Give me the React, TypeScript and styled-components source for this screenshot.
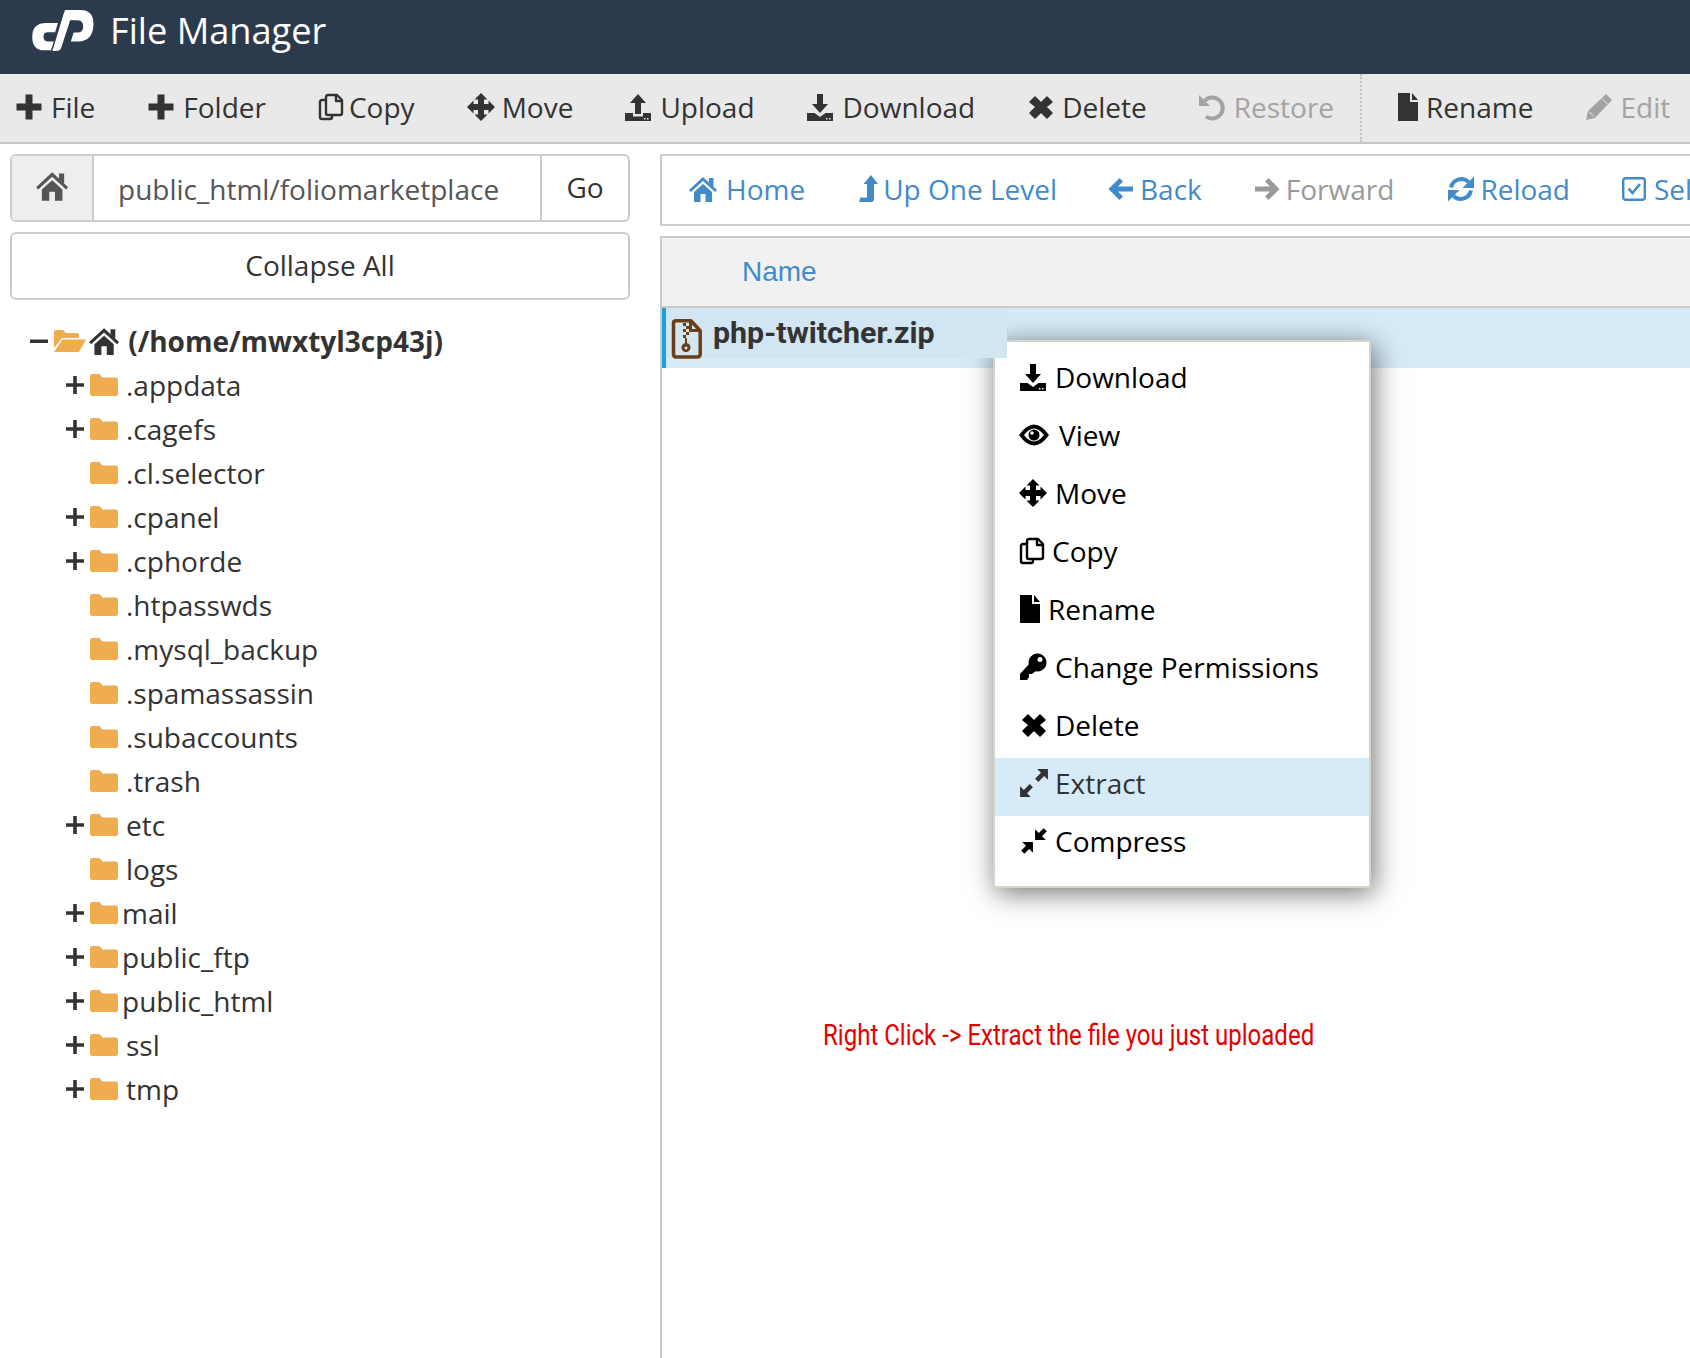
import React from "react";
import styled, { createGlobalStyle } from "styled-components";

const Global = createGlobalStyle`
  html, body { margin: 0; padding: 0; background: #fff; }
  body { font-family: "Open Sans", "Liberation Sans", sans-serif; color: #333; overflow: hidden; }
  * { box-sizing: border-box; }
`;

type IconName =
  | "plus" | "files" | "move" | "upload" | "download" | "times" | "undo" | "file" | "pencil"
  | "home" | "levelUp" | "left" | "right" | "refresh" | "check" | "folder" | "folderOpen"
  | "eye" | "key" | "expand" | "compress" | "zip";

const shapes: Record<IconName, { w: number; h?: number; body: React.ReactNode }> = {
  plus: { w: 28, body: <path d="M10.500 1.500h7v9h9v7h-9v9h-7v-9h-9v-7h9z" /> },
  files: {
    w: 23,
    body: (
      <g fill="none" stroke="currentColor" strokeWidth="2.400" strokeLinejoin="round">
        <path d="M8 7H4Q2 7 2 9v15q0 2 2 2h8q2 0 2-2v-2" />
        <path d="M10 2h9l5 5v13q0 2-2 2H10q-2 0-2-2V4q0-2 2-2z" />
        <path d="M18 2v6h6" />
      </g>
    ),
  },
  move: {
    w: 27,
    body: <path d="M14 0L20.500 6.500H17V11H21.500V7.500L28 14 21.500 20.500V17H17V21.500H20.500L14 28 7.500 21.500H11V17H6.500V20.500L0 14 6.500 7.500V11H11V6.500H7.500z" />,
  },
  upload: {
    w: 28,
    body: <path fillRule="evenodd" d="M14 1l8 9h-5V21h-6V10H6zM1 20h8v3.500h10V20h8v8H1zM20 25h1.500v1.500H20zM23 25h1.500v1.500H23z" />,
  },
  download: {
    w: 29,
    body: <path fillRule="evenodd" d="M11 1h6v10h5l-8 9-8-9h5zM1 20h7.500l5.500 4 5.500-4H27v8H1zM20 25h1.500v1.500H20zM23 25h1.500v1.500H23z" />,
  },
  times: {
    w: 25,
    body: <path strokeLinejoin="round" stroke="currentColor" strokeWidth="1.500" d="M6 4l6 6 6-6 5 5-6 5 6 6-5 5-6-6-6 6-5-5 6-6-6-5z" />,
  },
  undo: {
    w: 29,
    body: (
      <g>
        <path fill="none" stroke="currentColor" strokeWidth="4" d="M9 23.500A10.500 10.500 0 1 0 7.500 8" />
        <path d="M2 2v11h11z" />
      </g>
    ),
  },
  file: { w: 21, body: <path fillRule="evenodd" d="M1 0h12v9h8v19H1zM15 0l6 7h-6z" /> },
  pencil: {
    w: 28,
    body: (
      <g>
        <path d="M22 1l6 6-17 18-9 2 2-9z" />
        <path fill="none" stroke="#e9e9e9" strokeWidth="1" d="M18 5.500l5.500 5.500M5 18.500l5 5" />
      </g>
    ),
  },
  home: {
    w: 30,
    body: (
      <g>
        <path d="M15 2L29 15l-1.800 2L15 6 2.800 17 1 15z" />
        <path d="M6 17L15 9l9 8v10h-6.500v-8h-5v8H6z" />
        <path d="M21 3h4.500v9L21 8z" />
      </g>
    ),
  },
  levelUp: { w: 18, body: <path d="M14 0l7 9h-4v15q0 3-3 3H2l1.500-4.500H10V9H6.500z" /> },
  left: { w: 24, body: <path d="M11.500 3l3.500 3.500-5 5h15v5H10l5 5-3.500 3.500L0.500 14z" /> },
  right: { w: 24, body: <path d="M14.500 3L11 6.500l5 5H1v5h15l-5 5 3.500 3.500 11-11z" /> },
  refresh: {
    w: 26,
    body: (
      <g>
        <path fill="none" stroke="currentColor" strokeWidth="4" d="M5 12.500A10.500 10.500 0 0 1 22.500 7" />
        <path d="M28 1.500v11.500H16.500z" />
        <path fill="none" stroke="currentColor" strokeWidth="4" d="M25 15.500A10.500 10.500 0 0 1 7.500 21" />
        <path d="M2 26.500V15h11.500z" />
      </g>
    ),
  },
  check: {
    w: 25,
    body: (
      <g fill="none" stroke="currentColor">
        <rect x="2.200" y="3.200" width="21.600" height="21.600" rx="2.500" strokeWidth="2.400" />
        <path strokeWidth="2.600" d="M7.500 13.500l4 4.500 7.500-9" />
      </g>
    ),
  },
  folder: { w: 28, body: <path d="M0 5.500Q0 3 2.500 3h7l3 3.500h13Q28 6.500 28 9v14q0 2-2 2H2q-2 0-2-2z" /> },
  folderOpen: {
    w: 32,
    body: (
      <g>
        <path d="M0 5q0-2 2-2h7l3 3h11q2 0 2 2v3H8L1 20H0z" />
        <path d="M8.500 12.500H32l-7 12.500H0z" />
      </g>
    ),
  },
  eye: {
    w: 32,
    body: (
      <g>
        <path d="M0 14Q15-7 30 14 15 35 0 14z" />
        <path fill="#fff" d="M5 14Q15 1 25 14 15 27 5 14z" />
        <circle cx="15" cy="14" r="5.500" />
        <circle cx="13" cy="12" r="1.800" fill="#fff" />
      </g>
    ),
  },
  key: {
    w: 28,
    body: (
      <g>
        <path fillRule="evenodd" d="M18.500 0.500a9 9 0 1 1-.01 0zM21 4a2.500 2.500 0 1 0 .01 0z" />
        <path d="M11 10L1 21v6h7l2-3v-3h3l5-4z" />
      </g>
    ),
  },
  expand: {
    w: 28,
    body: <path d="M17 1h10v10l-3.500-3.500-5.500 5.500-3-3 5.500-5.500zM11 27H1V17l3.500 3.500L10 15l3 3-5.500 5.500z" />,
  },
  compress: {
    w: 28,
    body: <path d="M15 13V3l3.500 3.500L23 2l3 3-4.500 4.500L25 13zM13 15v10l-3.500-3.500L5 26l-3-3 4.500-4.500L3 15z" />,
  },
  zip: {
    w: 30,
    h: 40,
    body: (
      <g>
        <path fill="none" stroke="currentColor" strokeWidth="3.500" strokeLinejoin="round" d="M4 1.800h15l9.200 10V35q0 3-3 3H4q-2.500 0-2.500-3V4q0-2.200 2.500-2.200z" />
        <path fill="none" stroke="currentColor" strokeWidth="3" d="M18.500 2v9.500h9.500" />
        <path d="M11 4h3v3h-3zM14 7h3v3h-3zM11 10h3v3h-3zM14 13h3v3h-3zM11 16h3v3h-3zM13 19h2v6h-2z" />
        <path fillRule="evenodd" d="M14 24a4.500 4.500 0 1 1-.01 0zM14 27.500a1.500 1.500 0 1 0 .01 0z" />
      </g>
    ),
  },
};

const Svg = styled.svg<{ $h: number }>`
  height: ${(p) => p.$h}px;
  flex: none;
  fill: currentColor;
  display: block;
  overflow: visible;
`;

const Icon = ({ name, h = 28 }: { name: IconName; h?: number }) => {
  const s = shapes[name];
  const vh = s.h ?? 28;
  return (
    <Svg $h={h} viewBox={`0 0 ${s.w} ${vh}`} aria-hidden="true">
      {s.body}
    </Svg>
  );
};

const Page = styled.div`
  width: 1690px;
  height: 1358px;
  position: relative;
  overflow: hidden;
  display: flex;
  flex-direction: column;
`;

const Header = styled.header`
  height: 74px;
  flex: none;
  background: #2c3a4d;
  display: flex;
  align-items: center;
  padding: 0 0 14px 32px;
  gap: 16px;
`;

const Logo = styled.svg`
  width: 62px;
  height: 41px;
  fill: #fff;
  flex: none;
`;

const Title = styled.h1`
  margin: 0;
  font-size: 36.200px;
  font-weight: 400;
  color: #fff;
  line-height: 1;
`;

const Toolbar = styled.nav`
  height: 70px;
  flex: none;
  background: #e9e9e9;
  border-bottom: 2px solid #c8c8c8;
  display: flex;
  align-items: stretch;
  padding-left: 15px;
  white-space: nowrap;
`;

const ToolItem = styled.a<{ $off?: boolean; $after?: number }>`
  display: flex;
  align-items: center;
  gap: 8px;
  margin-right: ${(p) => p.$after ?? 52}px;
  padding-bottom: 2px;
  font-size: 28px;
  color: ${(p) => (p.$off ? "#a3a3a3" : "#333")};
`;

const ToolDivider = styled.div`
  border-left: 2px dotted #c4c4c4;
  margin: 0 35px 0 -26px;
`;

const Body = styled.div`
  flex: 1;
  display: grid;
  grid-template-columns: 660px 1fr;
  min-height: 0;
`;

const Side = styled.aside`
  padding: 10px 30px 0 10px;
  display: flex;
  flex-direction: column;
  gap: 10px;
`;

const PathGroup = styled.div`
  height: 68px;
  display: flex;
  border: 2px solid #ccc;
  border-radius: 6px;
  overflow: hidden;
  font-size: 28px;
`;

const HomeAddon = styled.div`
  width: 82px;
  background: #eee;
  border-right: 2px solid #ccc;
  display: flex;
  align-items: center;
  justify-content: center;
  color: #555;
  padding-bottom: 4px;
`;

const PathValue = styled.div`
  flex: 1;
  padding: 2px 0 0 24px;
  display: flex;
  align-items: center;
  color: #555;
`;

const GoAddon = styled.div`
  width: 88px;
  border-left: 2px solid #ccc;
  display: flex;
  align-items: center;
  justify-content: center;
  color: #333;
  padding-bottom: 2px;
`;

const CollapseButton = styled.button`
  height: 68px;
  width: 100%;
  background: #fff;
  border: 2px solid #ccc;
  border-radius: 6px;
  font: 400 28px "Open Sans", sans-serif;
  color: #333;
  padding: 0 0 2px;
`;

const Tree = styled.ul`
  list-style: none;
  margin: 9px 0 0;
  padding: 0;
`;

const TreeRow = styled.li<{ $root?: boolean }>`
  height: 44px;
  display: flex;
  align-items: center;
  font-size: 28px;
  font-weight: ${(p) => (p.$root ? 700 : 400)};
  padding-left: ${(p) => (p.$root ? 20 : 56)}px;
  color: #333;
  white-space: nowrap;
`;

const Toggle = styled.span`
  width: 24px;
  flex: none;
  display: flex;
  align-items: center;
  color: #333;
  font-size: 0;
`;

const ToggleBar = styled.svg`
  width: 18px;
  height: 18px;
  fill: currentColor;
`;

const FolderMark = styled.span<{ $tight?: boolean }>`
  color: #f0ad4e;
  margin-right: ${(p) => (p.$tight ? 4 : 8)}px;
  flex: none;
`;

const RootHome = styled.span`
  color: #333;
  margin-right: 8px;
  margin-left: -2px;
  flex: none;
`;

const Main = styled.main`
  padding-top: 10px;
  display: flex;
  flex-direction: column;
  gap: 10px;
  min-width: 0;
`;

const NavBar = styled.div`
  height: 72px;
  flex: none;
  border: 2px solid #ccc;
  border-right: 0;
  border-radius: 2px 0 0 2px;
  display: flex;
  align-items: center;
  padding: 0 0 2px 26px;
  white-space: nowrap;
  overflow: hidden;
`;

const NavItem = styled.a<{ $off?: boolean; $after?: number }>`
  display: flex;
  align-items: center;
  gap: 8px;
  margin-right: ${(p) => p.$after ?? 52}px;
  font-size: 28px;
  color: ${(p) => (p.$off ? "#999" : "#428bca")};
  flex: none;
`;

const FilePane = styled.section`
  flex: 1;
  border-left: 2px solid #ccc;
  display: flex;
  flex-direction: column;
`;

const TableHead = styled.div`
  height: 72px;
  flex: none;
  background: #f1f1f1;
  border-top: 2px solid #ccc;
  border-bottom: 2px solid #ccc;
  display: flex;
  align-items: center;
  padding-left: 80px;
  font: 400 28px "Liberation Sans", Arial, sans-serif;
  color: #428bca;
`;

const FileRow = styled.div`
  height: 60px;
  flex: none;
  background: #d6eaf8;
  border-left: 4px solid #1d9fe0;
  display: flex;
  align-items: flex-start;
`;

const FileCell = styled.div`
  width: 341px;
  height: 50px;
  background: #d2e5f3;
  display: flex;
  align-items: center;
  padding: 0 0 2px 6px;
  gap: 11px;
  position: relative;
  z-index: 3;
`;

const ZipMark = styled.span`
  color: #6b4018;
  margin-top: 14px;
  flex: none;
`;

const FileName = styled.span`
  font: 700 30.400px Roboto, "Open Sans", sans-serif;
  color: #333;
  white-space: nowrap;
`;

const Menu = styled.ul`
  position: absolute;
  left: 993px;
  top: 340px;
  width: 378px;
  height: 548px;
  margin: 0;
  padding: 10px 0 0;
  list-style: none;
  background: #fff;
  border: 2px solid #d4d4c8;
  box-shadow: 3px 5px 26px rgba(0, 0, 0, 0.55);
  z-index: 2;
`;

const MenuItem = styled.li<{ $on?: boolean; $indent?: number; $gap?: number }>`
  height: 58px;
  display: flex;
  align-items: center;
  gap: ${(p) => p.$gap ?? 8}px;
  padding: 0 0 8px ${(p) => 24 + (p.$indent ?? 0)}px;
  font-size: 28px;
  color: ${(p) => (p.$on ? "#333" : "#000")};
  background: ${(p) => (p.$on ? "#d6eaf8" : "transparent")};
`;

const Annotation = styled.div`
  position: absolute;
  left: 823px;
  top: 1017px;
  font: 400 30px Roboto, sans-serif;
  color: #e60000;
  white-space: nowrap;
  transform: scaleX(0.801);
  transform-origin: left center;
`;

const tools: { icon: IconName; label: string; off?: boolean; after?: number }[] = [
  { icon: "plus", label: "File" },
  { icon: "plus", label: "Folder" },
  { icon: "files", label: "Copy" },
  { icon: "move", label: "Move", after: 51 },
  { icon: "upload", label: "Upload", after: 51 },
  { icon: "download", label: "Download", after: 54 },
  { icon: "times", label: "Delete", after: 50 },
  { icon: "undo", label: "Restore", off: true },
];

const navs: { icon: IconName; label: string; off?: boolean; after?: number }[] = [
  { icon: "home", label: "Home" },
  { icon: "levelUp", label: "Up One Level", after: 51 },
  { icon: "left", label: "Back" },
  { icon: "right", label: "Forward", off: true },
  { icon: "refresh", label: "Reload", after: 51 },
  { icon: "check", label: "Select All" },
];

const folders: { name: string; open?: boolean; tight?: boolean }[] = [
  { name: ".appdata", open: true },
  { name: ".cagefs", open: true },
  { name: ".cl.selector" },
  { name: ".cpanel", open: true },
  { name: ".cphorde", open: true },
  { name: ".htpasswds" },
  { name: ".mysql_backup" },
  { name: ".spamassassin" },
  { name: ".subaccounts" },
  { name: ".trash" },
  { name: "etc", open: true },
  { name: "logs" },
  { name: "mail", open: true, tight: true },
  { name: "public_ftp", open: true, tight: true },
  { name: "public_html", open: true, tight: true },
  { name: "ssl", open: true },
  { name: "tmp", open: true },
];

const menu: { icon: IconName; label: string; on?: boolean; indent?: number; gap?: number; h?: number }[] = [
  { icon: "download", label: "Download", gap: 7 },
  { icon: "eye", label: "View" },
  { icon: "move", label: "Move", gap: 9 },
  { icon: "files", label: "Copy", gap: 10 },
  { icon: "file", label: "Rename" },
  { icon: "key", label: "Change Permissions" },
  { icon: "times", label: "Delete", indent: 3 },
  { icon: "expand", label: "Extract", on: true, gap: 6, h: 30 },
  { icon: "compress", label: "Compress", gap: 6, h: 30 },
];

export default function App() {
  return (
    <Page>
      <Global />
      <Header>
        <Logo viewBox="37 30 180 120">
          <path d="M112 68l-8 27H82Q70 95 70 108t12 14h18l-8 26H72Q37 148 37 108t41-40z" />
          <path d="M133 30h45q40 0 38 44-2 48-44 48h-22l8-26h12q16 0 16-18t-16-18h-22l-26 80q-3 10-14 10H96l32-106z" />
        </Logo>
        <Title>File Manager</Title>
      </Header>
      <Toolbar>
        {tools.map((t) => (
          <ToolItem key={t.label} $off={t.off} $after={t.after}>
            <Icon name={t.icon} />
            {t.label}
          </ToolItem>
        ))}
        <ToolDivider />
        <ToolItem $after={51}>
          <Icon name="file" />
          Rename
        </ToolItem>
        <ToolItem $off>
          <Icon name="pencil" />
          Edit
        </ToolItem>
      </Toolbar>
      <Body>
        <Side>
          <PathGroup>
            <HomeAddon>
              <Icon name="home" h={32} />
            </HomeAddon>
            <PathValue>public_html/foliomarketplace</PathValue>
            <GoAddon>Go</GoAddon>
          </PathGroup>
          <CollapseButton>Collapse All</CollapseButton>
          <Tree>
            <TreeRow $root>
              <Toggle>
                <ToggleBar viewBox="0 0 18 18">
                  <path d="M0 7.500h18v3.500H0z" />
                </ToggleBar>
              </Toggle>
              <FolderMark $tight>
                <Icon name="folderOpen" />
              </FolderMark>
              <RootHome>
                <Icon name="home" h={30} />
              </RootHome>
              (/home/mwxtyl3cp43j)
            </TreeRow>
            {folders.map((f) => (
              <TreeRow key={f.name}>
                <Toggle>
                  {f.open && (
                    <ToggleBar viewBox="0 0 18 18">
                      <path d="M7.200 0h3.600v7.200H18v3.600h-7.200V18H7.200v-7.200H0V7.200h7.200z" />
                    </ToggleBar>
                  )}
                </Toggle>
                <FolderMark $tight={f.tight}>
                  <Icon name="folder" />
                </FolderMark>
                {f.name}
              </TreeRow>
            ))}
          </Tree>
        </Side>
        <Main>
          <NavBar>
            {navs.map((n) => (
              <NavItem key={n.label} $off={n.off} $after={n.after}>
                <Icon name={n.icon} />
                {n.label}
              </NavItem>
            ))}
          </NavBar>
          <FilePane>
            <TableHead>Name</TableHead>
            <FileRow>
              <FileCell>
                <ZipMark>
                  <Icon name="zip" h={40} />
                </ZipMark>
                <FileName>php-twitcher.zip</FileName>
              </FileCell>
            </FileRow>
          </FilePane>
        </Main>
      </Body>
      <Menu>
        {menu.map((m) => (
          <MenuItem key={m.label} $on={m.on} $indent={m.indent} $gap={m.gap}>
            <Icon name={m.icon} h={m.h} />
            {m.label}
          </MenuItem>
        ))}
      </Menu>
      <Annotation>Right Click -&gt; Extract the file you just uploaded</Annotation>
    </Page>
  );
}
